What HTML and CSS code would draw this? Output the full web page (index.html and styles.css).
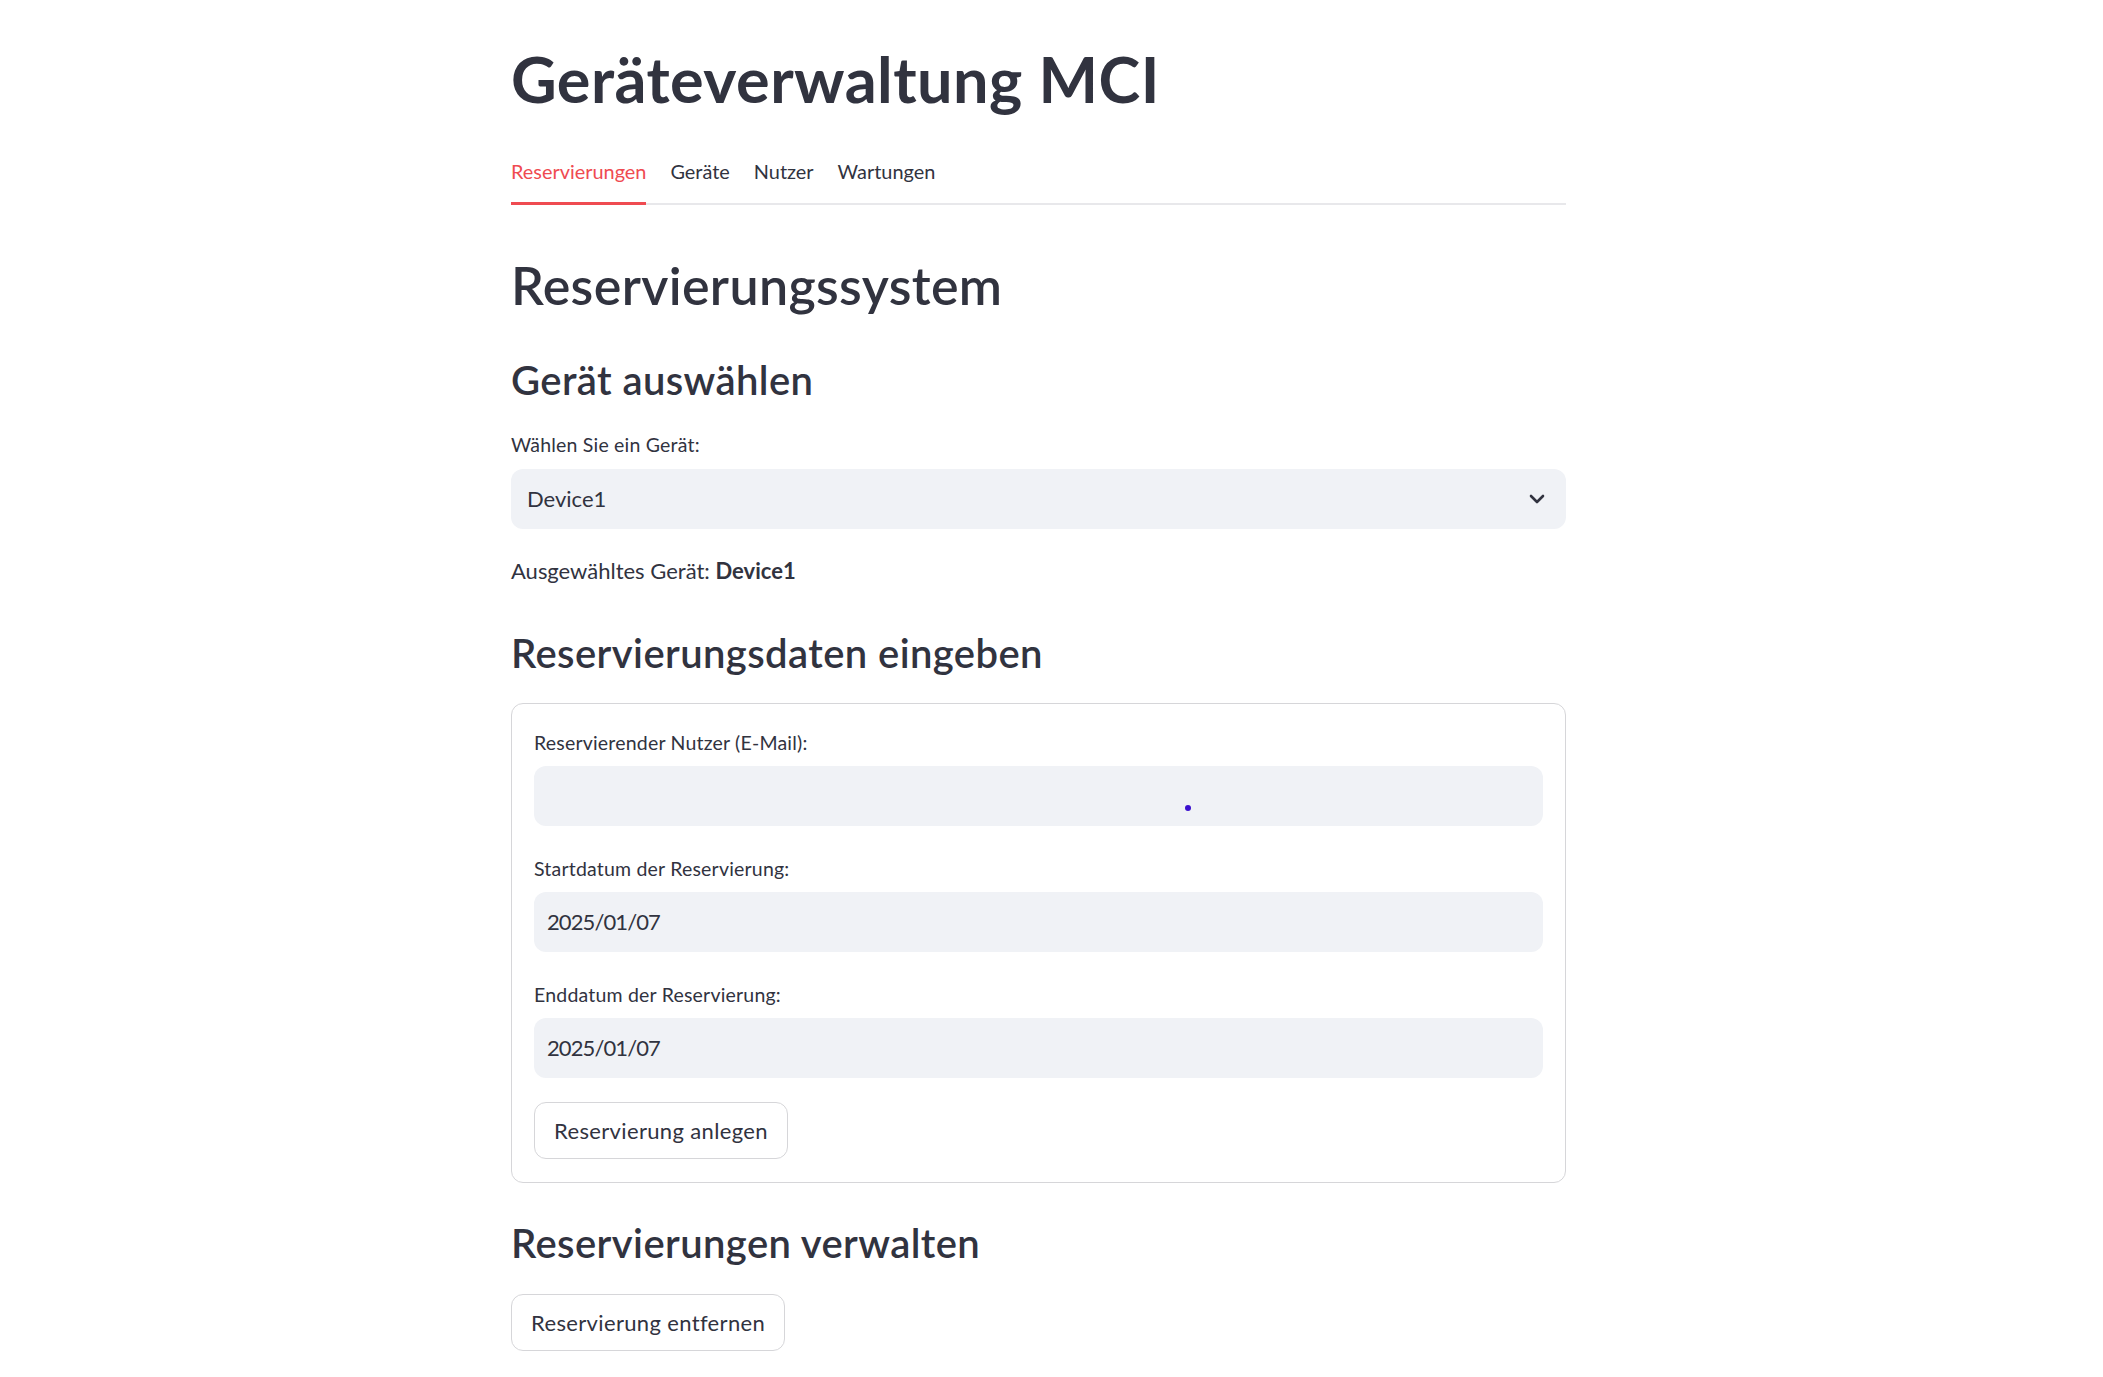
FILE: index.html
```html
<!DOCTYPE html>
<html lang="de">
<head>
<meta charset="utf-8">
<title>Geräteverwaltung MCI</title>
<link rel="stylesheet" href="styles.css">
</head>
<body>
<div class="app">
  <main class="main">
    <h1 class="title">Geräteverwaltung MCI</h1>

    <nav class="tabs">
      <span class="tab active">Reservierungen</span>
      <span class="tab">Geräte</span>
      <span class="tab">Nutzer</span>
      <span class="tab">Wartungen</span>
    </nav>

    <h2 class="h2">Reservierungssystem</h2>

    <h3 class="h3 h3-first">Gerät auswählen</h3>

    <div class="label label-select">Wählen Sie ein Gerät:</div>
    <div class="select">
      <span class="select-value">Device1</span>
      <svg class="chevron" width="16" height="10" viewBox="0 0 16 10" aria-hidden="true">
        <path d="M2 2 L8 8 L14 2" fill="none" stroke="#31333f" stroke-width="2.6" stroke-linecap="round" stroke-linejoin="round"/>
      </svg>
    </div>

    <p class="body-text">Ausgewähltes Gerät: <strong>Device1</strong></p>

    <h3 class="h3 h3-data">Reservierungsdaten eingeben</h3>

    <form class="form">
      <div class="field">
        <div class="label">Reservierender Nutzer (E-Mail):</div>
        <div class="input input-email"><span class="cursor-dot"></span></div>
      </div>
      <div class="field">
        <div class="label">Startdatum der Reservierung:</div>
        <div class="input"><span class="input-value">2025/01/07</span></div>
      </div>
      <div class="field">
        <div class="label">Enddatum der Reservierung:</div>
        <div class="input"><span class="input-value">2025/01/07</span></div>
      </div>
      <button type="button" class="btn btn-form">Reservierung anlegen</button>
    </form>

    <h3 class="h3 h3-manage">Reservierungen verwalten</h3>

    <button type="button" class="btn btn-remove">Reservierung entfernen</button>
  </main>
</div>
</body>
</html>
```

FILE: styles.css
```css
* { box-sizing: border-box; }

html, body {
  margin: 0;
  padding: 0;
  background: #ffffff;
}

body {
  font-family: "Source Sans Pro", Lato, "Noto Sans", sans-serif;
  color: #31333f;
}

.app {
  padding-right: 26px;
}

.main {
  width: 1055px;
  margin: 0 auto;
  padding-top: 39px;
  display: flex;
  flex-direction: column;
  align-items: flex-start;
}

.title {
  margin: 0;
  font-size: 63px;
  line-height: 80px;
  font-weight: 700;
  letter-spacing: 0.45px;
}

.tabs {
  margin-top: 37px;
  width: 100%;
  display: flex;
  gap: 24px;
  box-shadow: inset 0 -2px 0 #e8e8eb;
}

.tab {
  font-size: 19.9px;
  line-height: 30px;
  padding-bottom: 16px;
  border-bottom: 3px solid transparent;
}

.tab.active {
  color: #ef4b51;
  border-bottom-color: #ef4b51;
}

.h2 {
  margin: 45px 0 0;
  font-size: 52px;
  line-height: 70px;
  font-weight: 600;
  letter-spacing: 0.35px;
}

.h3 {
  margin: 0;
  font-size: 40px;
  line-height: 54px;
  font-weight: 600;
  letter-spacing: 0.4px;
}

.h3-first { margin-top: 33px; }
.h3-data { margin-top: 37px; }
.h3-manage { margin-top: 33px; }

.label {
  font-size: 19.5px;
  line-height: 30px;
  letter-spacing: 0.2px;
}

.label-select { margin-top: 23px; }

.select {
  margin-top: 9px;
  width: 100%;
  height: 60px;
  background: #f0f2f6;
  border-radius: 12px;
  display: flex;
  align-items: center;
  justify-content: space-between;
  padding: 0 21px 0 16px;
}

.select-value {
  font-size: 22px;
  line-height: 36px;
}

.input-value {
  font-size: 22px;
  line-height: 36px;
  letter-spacing: -0.9px;
}

.chevron { display: block; }

.body-text {
  margin: 24px 0 0;
  font-size: 22px;
  line-height: 36px;
}

.body-text strong { font-weight: 700; }

.form {
  margin: 23px 0 0;
  width: 100%;
  border: 1px solid #d6d6d9;
  border-radius: 12px;
  padding: 24px 22px 23px;
  display: flex;
  flex-direction: column;
  align-items: flex-start;
  gap: 28px;
}

.field {
  width: 100%;
  display: flex;
  flex-direction: column;
  gap: 8px;
}

.input {
  position: relative;
  width: 100%;
  height: 60px;
  background: #f0f2f6;
  border-radius: 12px;
  display: flex;
  align-items: center;
  padding: 0 13px;
}

.cursor-dot {
  position: absolute;
  left: 651px;
  top: 39px;
  width: 6px;
  height: 6px;
  border-radius: 50%;
  background: #3b10cf;
}

.btn {
  font-family: inherit;
  color: #31333f;
  background: #ffffff;
  border: 1px solid #d6d6d9;
  border-radius: 12px;
  height: 57px;
  padding: 0 19px;
  font-size: 22px;
  line-height: 36px;
  letter-spacing: 0.35px;
  cursor: pointer;
}

.btn-form { margin-top: -4px; }

.btn-remove { margin-top: 24px; }
```
